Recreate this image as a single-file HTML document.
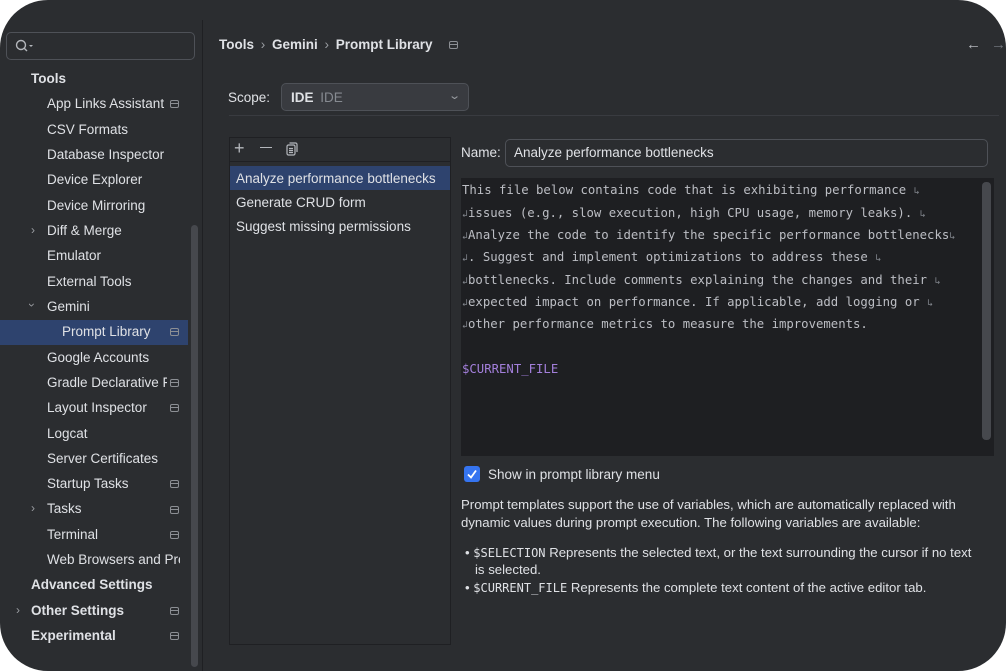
<!DOCTYPE html>
<html><head><meta charset="utf-8"><style>
*{margin:0;padding:0;box-sizing:border-box}
body{width:1006px;height:671px;background:#fff;overflow:hidden;font-family:"Liberation Sans",sans-serif;font-size:13.5px;color:#dfe1e5}
#win{position:absolute;left:0;top:0;width:1006px;height:671px;background:#2b2d30;border-radius:48px;overflow:hidden}
.a{position:absolute;white-space:nowrap}
.si{position:absolute;left:47px;white-space:nowrap}
.b{font-weight:bold}
.ic{position:absolute;width:9px;height:8px;border:1.3px solid #8c8f94;border-radius:2px}
.ic:after{content:"";position:absolute;left:0;right:0;top:2px;border-top:1.3px solid #8c8f94}
.chev{position:absolute;color:#9a9da2;font-size:12px}
.mono{font-family:"DejaVu Sans Mono","Liberation Mono",monospace;font-size:12.3px;color:#bcbec4}
.ml{position:absolute;left:462px;white-space:pre}
.w{color:#80848b;font-size:10px}
.sep{color:#9a9da2;font-weight:normal;margin:0 3px}
</style></head><body><div id="win">
<div class="a" style="left:6px;top:32px;width:189px;height:28px;border:1px solid #4e5157;border-radius:5px"></div>
<svg class="a" style="left:14px;top:38px" width="20" height="16" viewBox="0 0 20 16"><circle cx="7" cy="7" r="4.5" fill="none" stroke="#b4b7bc" stroke-width="1.4"/><line x1="10.2" y1="10.2" x2="13" y2="13" stroke="#b4b7bc" stroke-width="1.4"/><path d="M15 7l2 2 2-2z" fill="#b4b7bc"/></svg>
<div class="a" style="left:202px;top:20px;width:1px;height:651px;background:#1f2023"></div>
<div class="a" style="left:191px;top:225px;width:7px;height:442px;background:#46484d;border-radius:4px"></div>
<div class="a" style="left:0;top:320px;width:188px;height:25px;background:#2e436e"></div>
<div class="si b" style="left:31px;top:71px">Tools</div>
<div class="si" style="top:96px">App Links Assistant</div><div class="ic" style="left:170px;top:100px"></div>
<div class="si" style="top:122px">CSV Formats</div>
<div class="si" style="top:147px">Database Inspector</div>
<div class="si" style="top:172px">Device Explorer</div>
<div class="si" style="top:198px">Device Mirroring</div>
<div class="chev" style="left:31px;top:223px">&#8250;</div><div class="si" style="top:223px">Diff &amp; Merge</div>
<div class="si" style="top:248px">Emulator</div>
<div class="si" style="top:274px">External Tools</div>
<div class="chev" style="left:30px;top:298px;transform:rotate(90deg)">&#8250;</div><div class="si" style="top:299px">Gemini</div>
<div class="si" style="left:62px;top:324px">Prompt Library</div><div class="ic" style="left:170px;top:328px"></div>
<div class="si" style="top:350px">Google Accounts</div>
<div class="si" style="top:375px;width:120px;overflow:hidden">Gradle Declarative F</div><div class="ic" style="left:170px;top:379px"></div>
<div class="si" style="top:400px">Layout Inspector</div><div class="ic" style="left:170px;top:404px"></div>
<div class="si" style="top:426px">Logcat</div>
<div class="si" style="top:451px">Server Certificates</div>
<div class="si" style="top:476px">Startup Tasks</div><div class="ic" style="left:170px;top:480px"></div>
<div class="chev" style="left:31px;top:501px">&#8250;</div><div class="si" style="top:501px">Tasks</div><div class="ic" style="left:170px;top:506px"></div>
<div class="si" style="top:527px">Terminal</div><div class="ic" style="left:170px;top:531px"></div>
<div class="si" style="top:552px;width:133px;overflow:hidden">Web Browsers and Pre</div>
<div class="si b" style="left:31px;top:577px">Advanced Settings</div>
<div class="chev" style="left:16px;top:603px">&#8250;</div><div class="si b" style="left:31px;top:603px">Other Settings</div><div class="ic" style="left:170px;top:607px"></div>
<div class="si b" style="left:31px;top:628px">Experimental</div><div class="ic" style="left:170px;top:632px"></div>
<div class="a b" style="left:219px;top:37px">Tools <span class="sep">&#8250;</span> Gemini <span class="sep">&#8250;</span> Prompt Library</div>
<div class="ic" style="left:449px;top:41px"></div>
<div class="a" style="left:966px;top:36px;color:#b4b7bc;font-size:15px">&#8592;</div>
<div class="a" style="left:991px;top:36px;color:#6f737a;font-size:15px">&#8594;</div>
<div class="a" style="left:228px;top:90px">Scope:</div>
<div class="a" style="left:281px;top:83px;width:188px;height:28px;background:#393b40;border:1px solid #4e5157;border-radius:5px"></div>
<div class="a" style="left:291px;top:90px"><b>IDE</b> <span style="color:#868a91;margin-left:3px">IDE</span></div>
<div class="a" style="left:450px;top:89px;color:#9a9da2;font-size:11px;transform:scaleX(1.4)">&#8964;</div>
<div class="a" style="left:229px;top:115px;width:770px;height:1px;background:#393b40"></div>
<div class="a" style="left:229px;top:137px;width:222px;height:508px;border:1px solid #1f2023"></div>
<div class="a" style="left:230px;top:161px;width:220px;height:1px;background:#1f2023"></div>
<div class="a" style="left:234px;top:138px;color:#b4b7bc;font-size:18px">+</div>
<div class="a" style="left:260px;top:147px;width:12px;height:1.4px;background:#b4b7bc"></div>
<svg class="a" style="left:285px;top:142px" width="14" height="14" viewBox="0 0 14 14" fill="none" stroke="#b4b7bc" stroke-width="1.2"><rect x="2" y="3" width="8" height="10" rx="1.5"/><path d="M4.5 1h6a1.5 1.5 0 0 1 1.5 1.5V10"/><path d="M4 6.5h4M4 8.5h4M4 10.5h4"/></svg>
<div class="a" style="left:230px;top:166px;width:220px;height:24px;background:#2e436e"></div>
<div class="a" style="left:236px;top:171px">Analyze performance bottlenecks</div>
<div class="a" style="left:236px;top:195px">Generate CRUD form</div>
<div class="a" style="left:236px;top:219px">Suggest missing permissions</div>
<div class="a" style="left:461px;top:145px">Name:</div>
<div class="a" style="left:505px;top:139px;width:483px;height:28px;border:1px solid #4e5157;border-radius:5px"></div>
<div class="a" style="left:514px;top:145px">Analyze performance bottlenecks</div>
<div class="a" style="left:461px;top:178px;width:533px;height:278px;background:#1e1f22"></div>
<div class="a" style="left:982px;top:182px;width:9px;height:258px;background:#46484d;border-radius:4px"></div>
<div class="mono">
<div class="ml" style="top:183px">This file below contains code that is exhibiting performance <span class="w">&#8627;</span></div>
<div class="ml" style="top:206px"><span class="w">&#8626;</span>issues (e.g., slow execution, high CPU usage, memory leaks). <span class="w">&#8627;</span></div>
<div class="ml" style="top:228px"><span class="w">&#8626;</span>Analyze the code to identify the specific performance bottlenecks<span class="w">&#8627;</span></div>
<div class="ml" style="top:250px"><span class="w">&#8626;</span>. Suggest and implement optimizations to address these <span class="w">&#8627;</span></div>
<div class="ml" style="top:273px"><span class="w">&#8626;</span>bottlenecks. Include comments explaining the changes and their <span class="w">&#8627;</span></div>
<div class="ml" style="top:295px"><span class="w">&#8626;</span>expected impact on performance. If applicable, add logging or <span class="w">&#8627;</span></div>
<div class="ml" style="top:317px"><span class="w">&#8626;</span>other performance metrics to measure the improvements.</div>
<div class="ml" style="top:362px;color:#a37fdb">$CURRENT_FILE</div>
</div>
<div class="a" style="left:464px;top:466px;width:16px;height:16px;background:#3574f0;border-radius:3px"></div>
<svg class="a" style="left:464px;top:466px" width="16" height="16" viewBox="0 0 16 16"><path d="M4 8.5l3 3 5-7" fill="none" stroke="#fff" stroke-width="1.8"/></svg>
<div class="a" style="left:488px;top:467px">Show in prompt library menu</div>
<div class="a" style="left:461px;top:496px;line-height:17.5px;font-size:13.2px;white-space:normal;width:540px">Prompt templates support the use of variables, which are automatically replaced with dynamic values during prompt execution. The following variables are available:</div>
<div class="a" style="left:465px;top:544px;line-height:17.5px;font-size:13.2px">&#8226; <span style="font-family:'DejaVu Sans Mono',monospace;font-size:12px">$SELECTION</span> Represents the selected text, or the text surrounding the cursor if no text</div>
<div class="a" style="left:475px;top:561px;font-size:13.2px;line-height:17.5px">is selected.</div>
<div class="a" style="left:465px;top:579px;line-height:17.5px;font-size:13.2px">&#8226; <span style="font-family:'DejaVu Sans Mono',monospace;font-size:12px">$CURRENT_FILE</span> Represents the complete text content of the active editor tab.</div>
</div></body></html>
